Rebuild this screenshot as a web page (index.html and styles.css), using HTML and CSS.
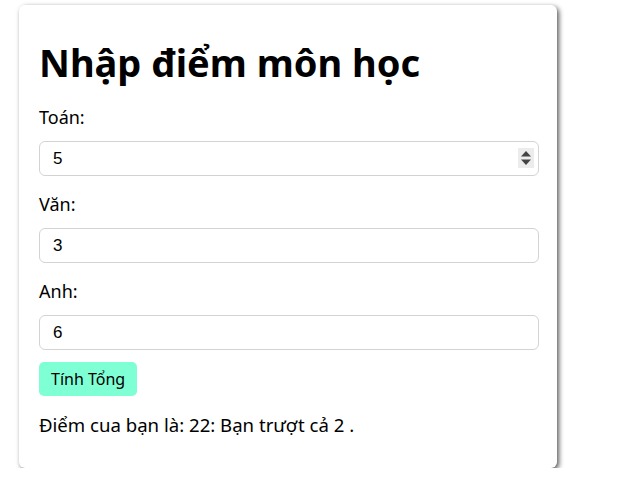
FILE: index.html
```html
<!DOCTYPE html>
<html lang="vi">
<head>
<meta charset="utf-8">
<title>Nhập điểm môn học</title>
<link rel="stylesheet" href="styles.css">
</head>
<body>
<div class="card">
  <h1 class="title">Nhập điểm môn học</h1>
  <label class="label" for="toan">Toán:</label>
  <div class="field-wrap">
    <input class="field" id="toan" type="number" value="5">
    <span class="spin" aria-hidden="true">
      <svg width="16" height="20" viewBox="0 0 16 20">
        <path d="M8 3 L13 8.5 L3 8.5 Z" fill="#444"/>
        <path d="M8 17 L13 11.5 L3 11.5 Z" fill="#444"/>
      </svg>
    </span>
  </div>
  <label class="label" for="van">Văn:</label>
  <div class="field-wrap">
    <input class="field" id="van" type="number" value="3">
  </div>
  <label class="label" for="anh">Anh:</label>
  <div class="field-wrap field-wrap-last">
    <input class="field" id="anh" type="number" value="6">
  </div>
  <button class="btn" type="button">Tính Tổng</button>
  <p class="result">Điểm cua bạn là: 22: Bạn trượt cả 2 .</p>
</div>
</body>
</html>
```

FILE: styles.css
```css
html, body {
  margin: 0;
  background: #ffffff;
}
body {
  padding: 5px 0 0 19px;
  font-family: "Noto Sans", "Open Sans", sans-serif;
  color: #000;
}
.card {
  width: 538px;
  box-sizing: border-box;
  padding: 34px 20px 31px;
  background: #fff;
  border-radius: 6px;
  box-shadow: 2px 2px 5px rgba(0, 0, 0, 0.65);
  display: flex;
  flex-direction: column;
  align-items: flex-start;
}
.title {
  margin: 0 0 20px;
  font-size: 38px;
  line-height: 46px;
  font-weight: 700;
}
.label {
  display: block;
  font-size: 18px;
  line-height: 24px;
  margin-bottom: 12px;
}
.field-wrap {
  position: relative;
  width: 500px;
  margin: 0 0 16px;
}
.field-wrap-last {
  margin-bottom: 12px;
}
.field {
  display: block;
  width: 100%;
  height: 35px;
  box-sizing: border-box;
  margin: 0;
  padding: 0 13px;
  border: 1px solid #d3d3d3;
  border-radius: 6px;
  font-family: "Liberation Sans", Arial, sans-serif;
  font-size: 17px;
  color: #000;
  background: #fff;
  outline: none;
  -moz-appearance: textfield;
}
.field::-webkit-inner-spin-button,
.field::-webkit-outer-spin-button {
  -webkit-appearance: none;
  margin: 0;
}
.spin {
  position: absolute;
  right: 5px;
  top: 7px;
  width: 16px;
  height: 20px;
  background: #ececec;
  display: flex;
}
.btn {
  height: 34px;
  padding: 0 12px;
  border: none;
  border-radius: 5px;
  background: #7fffd4;
  font-family: "Noto Sans", "Open Sans", sans-serif;
  font-size: 16px;
  color: #000;
}
.result {
  margin: 17px 0 0;
  font-size: 18.6px;
  line-height: 24px;
}
```
